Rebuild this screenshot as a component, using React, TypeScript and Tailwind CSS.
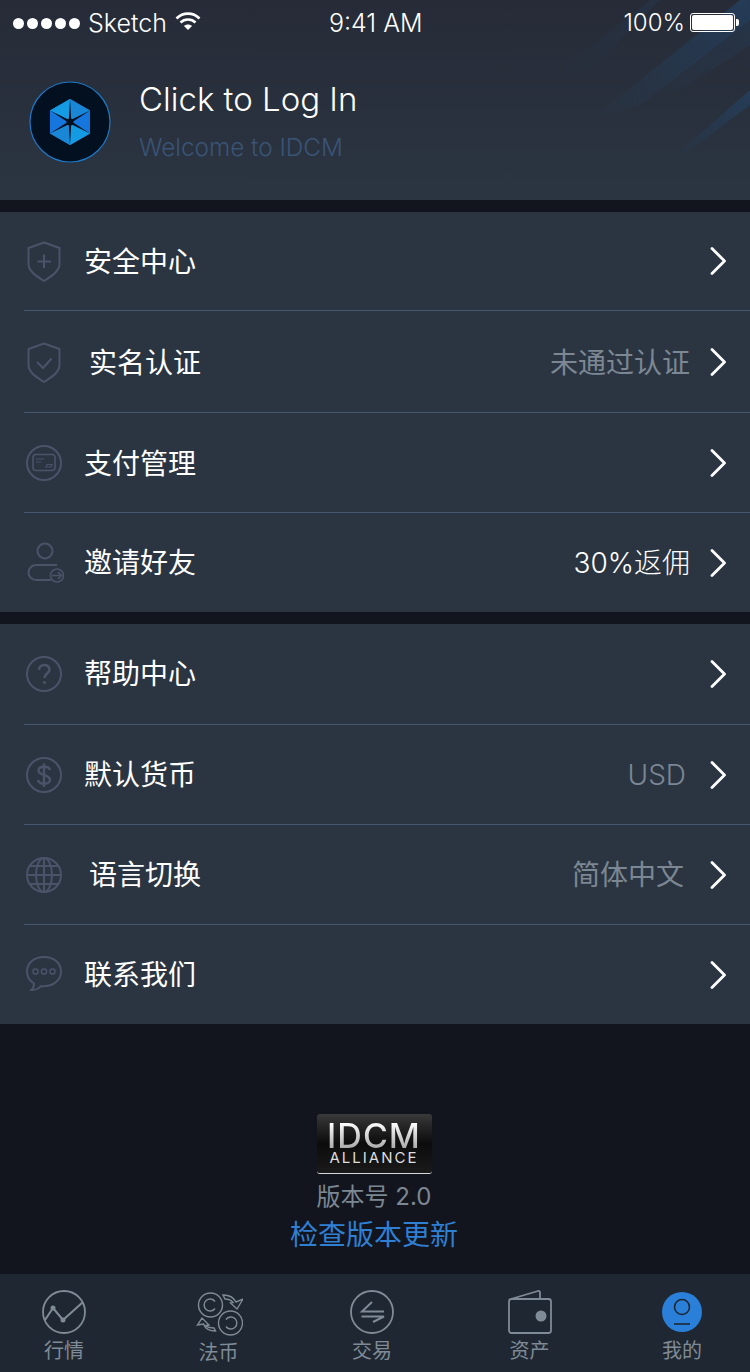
import type { ReactNode } from 'react';

const CJK = 'font-["Inter","Noto_Sans_CJK_SC",sans-serif]';

// 列表图标颜色
const ICON = '#4b5369';

function Chevron() {
  return (
    <svg width="16" height="28" viewBox="0 0 16 28" fill="none" className="shrink-0">
      <path d="M2 1.5 L14.5 14 L2 26.5" stroke="#fff" strokeWidth="2.8" strokeLinecap="round" strokeLinejoin="round" />
    </svg>
  );
}

function IconFrame({ children }: { children: ReactNode }) {
  return (
    <svg width="40" height="42" viewBox="0 0 40 42" fill="none" stroke={ICON} strokeWidth="2" className="shrink-0">
      {children}
    </svg>
  );
}

const shield = 'M20 2.5 L35.5 8 V24 C35.5 31 28 36 20 41 C12 36 4.5 31 4.5 24 V8 Z';

const icons: Record<string, ReactNode> = {
  plus: (
    <IconFrame>
      <path d={shield} />
      <path d="M20 14.5 V28 M13.5 21.5 H27" />
    </IconFrame>
  ),
  check: (
    <IconFrame>
      <path d={shield} />
      <path d="M13 21 L19 27 L27.5 17.5" />
    </IconFrame>
  ),
  card: (
    <IconFrame>
      <circle cx="20" cy="21" r="17" />
      <rect x="9" y="12.5" width="22" height="16" rx="3" strokeWidth="1.6" />
      <path d="M12 17 H20 M12 20 H17 M22 25 L23 22.5 H28 L27 25 Z" strokeWidth="1.2" />
    </IconFrame>
  ),
  invite: (
    <IconFrame>
      <circle cx="21" cy="9" r="7.5" />
      <path d="M33 23 H12 A7.5 7.5 0 0 0 12 38 H27" />
      <circle cx="33" cy="33.5" r="6.5" strokeWidth="1.6" />
      <path d="M28 33.5 H38 M34 30 L37.5 33.5 L34 37" strokeWidth="1.6" />
    </IconFrame>
  ),
  help: (
    <IconFrame>
      <circle cx="20" cy="21" r="17" />
      <path d="M15 17 C15 10.5 25.5 10.5 25.5 16.5 C25.5 20.5 20.5 20.5 20.5 25" strokeWidth="2.6" />
      <circle cx="20.5" cy="29.5" r="1.6" fill={ICON} stroke="none" />
    </IconFrame>
  ),
  dollar: (
    <IconFrame>
      <circle cx="20" cy="21" r="17" />
      <path d="M26 16 C25 11.5 14.5 11.5 14.5 16.5 C14.5 22 26 20 26 26 C26 31 15 31 14 26 M20 9.5 V33" strokeWidth="2.4" />
    </IconFrame>
  ),
  globe: (
    <IconFrame>
      <circle cx="20" cy="21" r="17" />
      <ellipse cx="20" cy="21" rx="8" ry="17" />
      <path d="M20 4 V38 M3 21 H37 M6 12 H34 M6 30 H34" />
    </IconFrame>
  ),
  chat: (
    <IconFrame>
      <path d="M20 3 C9.5 3 3 9.5 3 17.5 C3 23 6 27 10 29.5 C10 32 9 34.5 7.5 36 C11.5 36 15 34.5 17 32 C18 32.2 19 32.2 20 32.2 C30.5 32.2 37 25.5 37 17.5 C37 9.5 30.5 3 20 3 Z" />
      <circle cx="11.5" cy="17.5" r="2.6" strokeWidth="1.5" />
      <circle cx="20" cy="17.5" r="2.6" strokeWidth="1.5" />
      <circle cx="28.5" cy="17.5" r="2.6" strokeWidth="1.5" />
    </IconFrame>
  ),
};

interface RowProps {
  icon: string;
  label: string;
  value?: string;
  valueClass?: string;
  labelClass?: string;
  height: string;
  last?: boolean;
  nudge?: boolean;
}

function Row({ icon, label, value, valueClass, labelClass, height, last, nudge }: RowProps) {
  return (
    <div className={`ml-6 flex items-center pr-6 ${height} ${last ? '' : 'border-b border-[#465670]'}`}>
      {icons[icon]}
      <span className={`text-[28px] leading-none text-white ${nudge ? 'mt-[2px]' : ''} ${labelClass ?? 'ml-[20px]'}`}>{label}</span>
      <span className={`ml-auto text-[28px] leading-none ${nudge ? 'mt-[2px]' : ''} ${valueClass ?? ''}`}>{value}</span>
      <Chevron />
    </div>
  );
}

function Tab({ label, icon, labelClass }: { label: string; icon: ReactNode; labelClass?: string }) {
  return (
    <div className="flex w-[48px] flex-col items-center">
      <div className="flex h-[48px] w-[48px] items-center justify-center">{icon}</div>
      <span className={`whitespace-nowrap text-[20px] leading-[26px] text-[#7f8b96] ${labelClass ?? 'mt-[2px]'}`}>{label}</span>
    </div>
  );
}

const TAB = '#7f8b96';

export default function App() {
  return (
    <div className={`flex h-[1372px] w-[750px] flex-col overflow-hidden bg-[#13151e] ${CJK}`}>
      {/* 顶部 */}
      <div className="relative h-[200px] shrink-0 overflow-hidden bg-gradient-to-b from-[#262b37] to-[#2b3542]">
        <svg width="750" height="200" viewBox="0 0 750 200" className="absolute inset-0">
          <defs>
            <linearGradient id="streak" x1="1" y1="0" x2="0" y2="1">
              <stop offset="0" stopColor="#24405f" stopOpacity="0.8" />
              <stop offset="1" stopColor="#24405f" stopOpacity="0" />
            </linearGradient>
          </defs>
          <path d="M660 0 H650 L555 75 L590 70 Z" fill="url(#streak)" opacity="0.35" />
          <path d="M740 0 L590 120 L640 105 L750 20 V0 Z" fill="url(#streak)" />
          <path d="M750 20 L650 95 L680 90 L750 45 Z" fill="url(#streak)" opacity="0.5" />
          <path d="M750 90 L670 160 L690 150 L750 105 Z" fill="url(#streak)" />
        </svg>

        <div className="relative flex h-[46px] items-center text-[24px] leading-none text-white">
          <div className="ml-[13px] flex gap-[3px]">
            {[0, 1, 2, 3, 4].map(i => (
              <span key={i} className="h-[11px] w-[11px] rounded-full bg-white" />
            ))}
          </div>
          <span className="ml-[8px] text-[25px] font-light">Sketch</span>
          <svg width="26" height="20" viewBox="0 0 26 20" className="ml-[8px] mb-[4px]" fill="none" stroke="#fff" strokeWidth="2.6">
            <path d="M1.5 7.5 C8 1 18 1 24.5 7.5 M5.5 11.5 C9.5 7.5 16.5 7.5 20.5 11.5" />
            <path d="M9 15 C11 13 15 13 17 15 L13 19 Z" fill="#fff" stroke="none" />
          </svg>
          <span className="ml-[128px] text-[25px] font-light">9:41 AM</span>
          <span className="ml-auto font-light">100%</span>
          <div className="ml-[5px] mr-[11px] mb-[2px] flex items-center">
            <div className="h-[19px] w-[45px] rounded-[3px] border border-white p-[1px]">
              <div className="h-full w-full rounded-[2px] bg-white" />
            </div>
            <div className="ml-[1px] h-[7px] w-[3px] rounded-r-[2px] bg-white" />
          </div>
        </div>

        <div className="relative ml-[29px] mt-[35px] flex items-start">
          <svg width="82" height="82" viewBox="0 0 82 82">
            <circle cx="41" cy="41" r="40" fill="#02101f" stroke="#1c78c8" strokeWidth="1.2" />
            <path d="M41 18 L61 29.5 V52.5 L41 64 L21 52.5 V29.5 Z" fill="#1576dd" />
            <path d="M41 18 L61 29.5 L41 41 Z" fill="#1a86d6" />
            <path d="M21 52.5 L41 41 L41 64 Z" fill="#1a86d6" />
            <path d="M41 41 L61 52.5 L41 64 Z" fill="#149be4" />
            <path d="M41 41 L21 29.5 L41 18 Z" fill="#149be4" />
            <path
              d="M41 18 L42.2 38.8 L61 29.5 L43.4 41 L61 52.5 L42.2 43.2 L41 64 L39.8 43.2 L21 52.5 L38.6 41 L21 29.5 L39.8 38.8 Z"
              fill="#02101f"
            />
            <circle cx="41" cy="41" r="3.5" fill="#02101f" />
          </svg>
          <div className="ml-[28px] mt-[-1px] flex flex-col">
            <span className="text-[33px] font-light leading-[38px] text-white">Click to Log In</span>
            <span className="mt-[15px] text-[24.3px] font-light leading-[28px] text-[#3a5476]">Welcome to IDCM</span>
          </div>
        </div>
      </div>

      <div className="mt-[12px] shrink-0 bg-[#2b3542]">
        <Row icon="plus" label="安全中心" height="h-[99px]" nudge />
        <Row icon="check" label="实名认证" labelClass="ml-[25px]" value="未通过认证" valueClass="mr-[20px] text-[#7b8792]" height="h-[102px]" nudge />
        <Row icon="card" label="支付管理" height="h-[100px]" nudge />
        <Row icon="invite" label="邀请好友" value="30%返佣" valueClass="mr-[20px] font-light text-white" height="h-[99px]" last />
      </div>

      <div className="mt-[12px] shrink-0 bg-[#2b3542]">
        <Row icon="help" label="帮助中心" height="h-[101px]" />
        <Row icon="dollar" label="默认货币" value="USD" valueClass="mr-[24px] font-light text-[#7b8792]" height="h-[100px]" />
        <Row icon="globe" label="语言切换" labelClass="ml-[25px]" value="简体中文" valueClass="mr-[26px] text-[#7b8792]" height="h-[100px]" />
        <Row icon="chat" label="联系我们" height="h-[99px]" last />
      </div>

      {/* 版本信息 */}
      <div className="flex flex-1 flex-col items-center pr-[2px] pt-[90px]">
        <div className="flex h-[60px] w-[115px] flex-col items-center rounded-[3px] border-b border-[#d8d8d8] bg-gradient-to-b from-[#3a3a3a] via-[#0c0c0c] to-[#1a1a1a]">
          <span className="mt-[9px] bg-gradient-to-b from-white to-[#a8a8a8] bg-clip-text text-[34px] font-medium leading-[26px] tracking-[1px] text-transparent">IDCM</span>
          <span className="mt-[1px] text-[15px] leading-[16px] tracking-[2px] text-[#dedede]">ALLIANCE</span>
        </div>
        <span className="mt-[9px] text-[24px] leading-[28px] text-[#7b8792]">版本号 2.0</span>
        <span className="mt-[6px] text-[28px] leading-[36px] text-[#2f7fd3]">检查版本更新</span>
      </div>

      {/* 底部导航 */}
      <div className="flex h-[98px] shrink-0 justify-between bg-[#1f2732] pl-[40px] pr-[44px] pt-[14px]">
        <Tab
          label="行情"
          icon={
            <svg width="44" height="44" viewBox="0 0 44 44" fill="none" stroke={TAB} strokeWidth="1.8">
              <circle cx="22" cy="22" r="21" />
              <path d="M3 30 L11 18 L21 30 L41 12" strokeWidth="2" />
              <circle cx="11" cy="18" r="1.6" fill={TAB} />
              <circle cx="21" cy="30" r="1.6" fill={TAB} />
            </svg>
          }
        />
        <Tab
          label="法币"
          labelClass="mt-[4px]"
          icon={
            <svg width="48" height="48" viewBox="0 0 48 48" fill="none" stroke={TAB} strokeWidth="1.4">
              <circle cx="15.5" cy="17" r="12" />
              <path d="M20 13.5 A6 6 0 1 0 20 20.5" />
              <circle cx="35.5" cy="35" r="12" />
              <path d="M31 31.5 A6 6 0 1 1 31 38.5" />
              <path d="M28 7 C35 7 39 10 41 14 L48 11 L42 21 L35.5 15 L38 14.5 C36 12 32 11 30 11 Z" />
              <path d="M20.5 43 C14 43 10 40 8.5 36 L2.5 37 L7 30 L14 37 L11 37.5 C13 40 17 40 19 40 Z" />
            </svg>
          }
        />
        <div className="-translate-x-[1px]">
          <Tab
            label="交易"
            icon={
              <svg width="44" height="44" viewBox="0 0 44 44" fill="none" stroke={TAB} strokeWidth="1.8">
                <circle cx="22" cy="22" r="21" />
                <path d="M34 21.5 H12 L22 12 M11.5 26.5 H34 L23 32" strokeWidth="2" />
              </svg>
            }
          />
        </div>
        <div className="translate-x-[2px]">
          <Tab
            label="资产"
            icon={
              <svg width="44" height="44" viewBox="0 0 44 44" fill="none" stroke={TAB} strokeWidth="1.8">
                <rect x="1" y="9" width="42" height="34" rx="2.5" />
                <path d="M3 9 L30 1 C31.5 .6 32 1.5 32 3 V9" />
                <circle cx="33" cy="26" r="5.5" fill={TAB} stroke="none" />
              </svg>
            }
          />
        </div>
        <Tab
          label="我的"
          icon={
            <svg width="40" height="40" viewBox="0 0 40 40" fill="none" stroke="#1f2732" strokeWidth="1.6">
              <circle cx="20" cy="20" r="20" fill="#2a7fd8" stroke="none" />
              <circle cx="20" cy="15" r="7.5" />
              <path d="M12 32 H28" />
            </svg>
          }
        />
      </div>
    </div>
  );
}
